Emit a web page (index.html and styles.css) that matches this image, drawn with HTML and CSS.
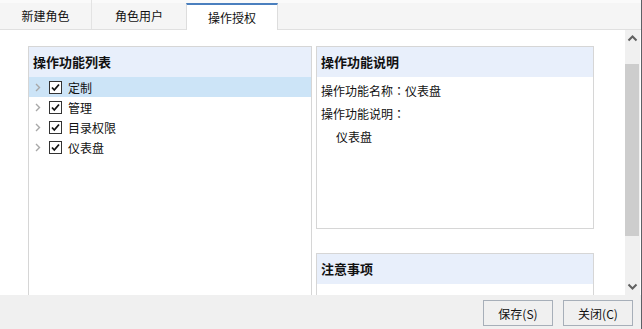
FILE: index.html
```html
<!DOCTYPE html>
<html lang="zh-CN">
<head>
  <meta charset="UTF-8" />
  <title>操作授权</title>
  <link rel="stylesheet" href="styles.css">
</head>
<body>
  <div class="window">
    <div class="tabs">
      <div class="tab">新建角色</div>
      <div class="tab">角色用户</div>
      <div class="tab active">操作授权</div>
    </div>

    <div class="main">
      <div class="content">
        <div class="panel list-panel">
          <div class="panel-head">操作功能列表</div>
          <div class="tree">
            <div class="row selected">
              <svg class="arrow" width="6" height="9" viewBox="0 0 6 9"><path d="M1 1l3.5 3.5L1 8" fill="none" stroke="#a8a8a8" stroke-width="1.4"/></svg>
              <span class="check"><svg width="11" height="11" viewBox="0 0 11 11"><path d="M2 5.5l2.3 2.5L9 2.5" fill="none" stroke="#111" stroke-width="1.8"/></svg></span>
              <span class="label">定制</span>
            </div>
            <div class="row">
              <svg class="arrow" width="6" height="9" viewBox="0 0 6 9"><path d="M1 1l3.5 3.5L1 8" fill="none" stroke="#a8a8a8" stroke-width="1.4"/></svg>
              <span class="check"><svg width="11" height="11" viewBox="0 0 11 11"><path d="M2 5.5l2.3 2.5L9 2.5" fill="none" stroke="#111" stroke-width="1.8"/></svg></span>
              <span class="label">管理</span>
            </div>
            <div class="row">
              <svg class="arrow" width="6" height="9" viewBox="0 0 6 9"><path d="M1 1l3.5 3.5L1 8" fill="none" stroke="#a8a8a8" stroke-width="1.4"/></svg>
              <span class="check"><svg width="11" height="11" viewBox="0 0 11 11"><path d="M2 5.5l2.3 2.5L9 2.5" fill="none" stroke="#111" stroke-width="1.8"/></svg></span>
              <span class="label">目录权限</span>
            </div>
            <div class="row">
              <svg class="arrow" width="6" height="9" viewBox="0 0 6 9"><path d="M1 1l3.5 3.5L1 8" fill="none" stroke="#a8a8a8" stroke-width="1.4"/></svg>
              <span class="check"><svg width="11" height="11" viewBox="0 0 11 11"><path d="M2 5.5l2.3 2.5L9 2.5" fill="none" stroke="#111" stroke-width="1.8"/></svg></span>
              <span class="label">仪表盘</span>
            </div>
          </div>
        </div>

        <div class="side">
          <div class="panel desc-panel">
            <div class="panel-head">操作功能说明</div>
            <div class="desc">
              <p>操作功能名称<span class="colon" lang="zh-TW">：</span>仪表盘</p>
              <p>操作功能说明<span class="colon" lang="zh-TW">：</span></p>
              <p class="indent">仪表盘</p>
            </div>
          </div>
          <div class="panel note-panel">
            <div class="panel-head">注意事项</div>
          </div>
        </div>
      </div>

      <div class="scrollbar">
        <svg class="sb-arrow" width="15" height="17" viewBox="0 0 15 17"><path d="M3.5 10.5l4-4 4 4" fill="none" stroke="#606060" stroke-width="2"/></svg>
        <div class="sb-track"><div class="sb-thumb"></div></div>
        <svg class="sb-arrow" width="15" height="17" viewBox="0 0 15 17"><path d="M3.5 6.5l4 4 4-4" fill="none" stroke="#606060" stroke-width="2"/></svg>
      </div>
    </div>

    <div class="footer">
      <button>保存(S)</button>
      <button>关闭(C)</button>
    </div>
  </div>
</body>
</html>
```

FILE: styles.css
```css
body {
  margin: 0;
  font-family: "Noto Sans CJK SC", "Noto Sans", sans-serif;
  font-size: 12px;
  color: #111;
  background: #ffffff;
  overflow: hidden;
}

.window {
  width: 641px;
  height: 329px;
  border-right: 1px solid #5c6066;
  display: flex;
  flex-direction: column;
}

.tabs {
  height: 29px;
  flex: none;
  display: flex;
  background: linear-gradient(#fafafa 0, #fafafa 3px, #f5f5f5 3px);
  border-bottom: 1px solid #e0e0e0;
  box-sizing: content-box;
}
.tab {
  width: 92px;
  display: flex;
  align-items: center;
  justify-content: center;
  padding-top: 2px;
  box-sizing: border-box;
  border-right: 1px solid #e3e3e3;
  line-height: 1;
}
.tab:nth-child(2) {
  width: 94px;
  border-right: none;
}
.tab.active {
  width: 92px;
  background: #ffffff;
  margin-top: 3px;
  margin-bottom: -1px;
  border-top: 2px solid #4a7fbe;
  border-left: 1px solid #dddddd;
  border-right: 1px solid #dddddd;
  padding-top: 0;
}

.main {
  flex: 1;
  display: flex;
  overflow: hidden;
  min-height: 0;
}
.content {
  flex: 1;
  display: flex;
  align-items: flex-start;
  gap: 4px;
  padding: 16px 0 0 28px;
}

.panel {
  flex: none;
  border: 1px solid #d6d6d6;
  background: #ffffff;
  box-sizing: border-box;
}
.panel-head {
  height: 30px;
  line-height: 30px;
  padding-left: 4px;
  background: #e8effb;
  font-size: 13px;
  font-weight: bold;
}

.list-panel {
  width: 284px;
  height: 300px;
}
.tree {
  display: flex;
  flex-direction: column;
}
.row {
  height: 20px;
  display: flex;
  align-items: center;
}
.row.selected {
  background: #cce4f7;
}
.arrow {
  margin-left: 6px;
}
.check {
  width: 13px;
  height: 13px;
  margin-left: 8px;
  border: 1px solid #333;
  box-sizing: border-box;
  display: flex;
  align-items: center;
  justify-content: center;
  background: #fff;
}
.label {
  margin-left: 6px;
}

.side {
  width: 278px;
  flex: none;
  display: flex;
  flex-direction: column;
  gap: 24px;
}
.desc-panel {
  height: 183px;
}
.note-panel {
  height: 80px;
}
.desc {
  padding: 2px 4px;
}
.desc p {
  margin: 0;
  height: 23px;
  line-height: 23px;
}
.desc p.indent {
  padding-left: 15px;
}
.colon {
  font-family: "Noto Sans CJK TC", "Noto Sans CJK JP", sans-serif;
}

.scrollbar {
  width: 15px;
  flex: none;
  background: #f0f0f0;
  display: flex;
  flex-direction: column;
  margin-right: 1px;
}
.sb-arrow {
  flex: none;
}
.sb-track {
  flex: 1;
  padding-top: 17px;
}
.sb-thumb {
  height: 172px;
  margin-right: 1px;
  background: #cdcdcd;
}

.footer {
  height: 34px;
  flex: none;
  background: #f0f0f0;
  display: flex;
  justify-content: flex-end;
  align-items: flex-start;
  gap: 10px;
  padding: 5px 8px 0 0;
  box-sizing: border-box;
}
.footer button {
  width: 70px;
  height: 26px;
  font-family: inherit;
  font-size: 12px;
  color: #111;
  background: #f0f0f0;
  border: 1px solid #a7afb9;
  padding: 0;
}
```
